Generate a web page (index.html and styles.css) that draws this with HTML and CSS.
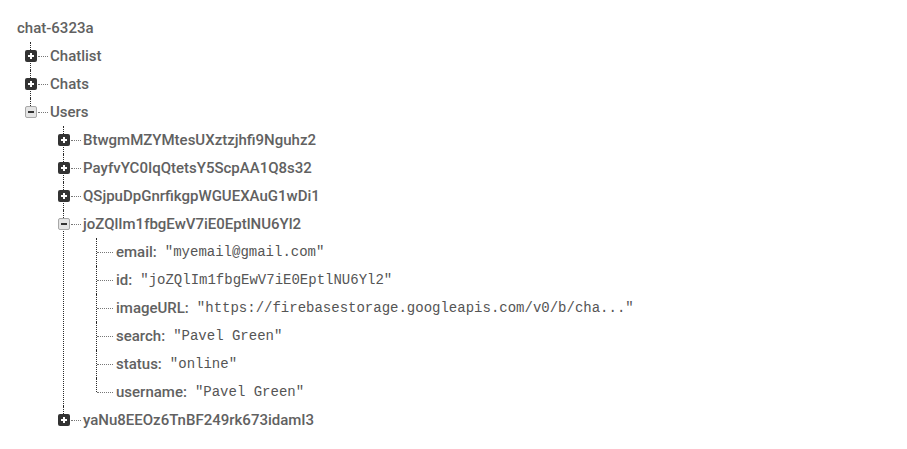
FILE: index.html
```html
<!DOCTYPE html>
<html>
<head>
<meta charset="utf-8">
<link rel="stylesheet" href="styles.css">
</head>
<body>
<div class="tree">
  <div class="root-row"><span class="key">chat-6323a</span></div>
  <ul class="children lvl1">
    <li>
      <div class="row"><span class="toggle plus"></span><span class="conn"></span><span class="key">Chatlist</span></div>
    </li>
    <li>
      <div class="row"><span class="toggle plus"></span><span class="conn"></span><span class="key">Chats</span></div>
    </li>
    <li>
      <div class="row"><span class="toggle minus"></span><span class="conn"></span><span class="key">Users</span></div>
      <ul class="children">
        <li><div class="row"><span class="toggle plus"></span><span class="conn"></span><span class="key">BtwgmMZYMtesUXztzjhfi9Nguhz2</span></div></li>
        <li><div class="row"><span class="toggle plus"></span><span class="conn"></span><span class="key">PayfvYC0IqQtetsY5ScpAA1Q8s32</span></div></li>
        <li><div class="row"><span class="toggle plus"></span><span class="conn"></span><span class="key">QSjpuDpGnrfikgpWGUEXAuG1wDi1</span></div></li>
        <li>
          <div class="row"><span class="toggle minus"></span><span class="conn"></span><span class="key">joZQlIm1fbgEwV7iE0EptlNU6Yl2</span></div>
          <ul class="children">
            <li><div class="row"><span class="conn leaf"></span><span class="key">email:</span><span class="val">"myemail@gmail.com"</span></div></li>
            <li><div class="row"><span class="conn leaf"></span><span class="key">id:</span><span class="val">"joZQlIm1fbgEwV7iE0EptlNU6Yl2"</span></div></li>
            <li><div class="row"><span class="conn leaf"></span><span class="key">imageURL:</span><span class="val">"https://firebasestorage.googleapis.com/v0/b/cha..."</span></div></li>
            <li><div class="row"><span class="conn leaf"></span><span class="key">search:</span><span class="val">"Pavel Green"</span></div></li>
            <li><div class="row"><span class="conn leaf"></span><span class="key">status:</span><span class="val">"online"</span></div></li>
            <li><div class="row"><span class="conn leaf"></span><span class="key">username:</span><span class="val">"Pavel Green"</span></div></li>
          </ul>
        </li>
        <li><div class="row"><span class="toggle plus"></span><span class="conn"></span><span class="key">yaNu8EEOz6TnBF249rk673idamI3</span></div></li>
      </ul>
    </li>
  </ul>
</div>
</body>
</html>
```

FILE: styles.css
```css
html, body {
  margin: 0;
  padding: 0;
  background: #ffffff;
}

.tree {
  padding: 14px 0 0 17px;
  font-family: Roboto, "Liberation Sans", sans-serif;
  font-size: 15px;
}

.root-row {
  height: 28px;
  display: flex;
  align-items: center;
}

.children {
  list-style: none;
  margin: 0 0 0 33px;
  padding: 0;
}

.children.lvl1 {
  margin-left: 13px;
}

.children li {
  position: relative;
}

.children li::before {
  content: "";
  position: absolute;
  left: 0;
  top: 0;
  bottom: 0;
  border-left: 1px dotted #2a2a2a;
}

.children li:last-child::before {
  bottom: auto;
  height: 14px;
}

.row {
  position: relative;
  height: 28px;
  display: flex;
  align-items: center;
}

.toggle {
  position: relative;
  z-index: 1;
  box-sizing: border-box;
  width: 12px;
  height: 12px;
  margin-left: -5px;
  border-radius: 2px;
  flex: none;
}

.toggle.plus {
  background: #333333;
}

.toggle.plus::before,
.toggle.plus::after {
  content: "";
  position: absolute;
  background: #ffffff;
}

.toggle.plus::before {
  left: 3px;
  top: 5px;
  width: 6px;
  height: 2px;
}

.toggle.plus::after {
  left: 5px;
  top: 3px;
  width: 2px;
  height: 6px;
}

.toggle.minus {
  background: #e4e4e4;
  border: 1px solid #a8a8a8;
}

.toggle.minus::before {
  content: "";
  position: absolute;
  left: 2px;
  top: 4px;
  width: 6px;
  height: 2px;
  background: #333333;
}

.conn {
  flex: none;
  width: 10px;
  margin-left: 1px;
  margin-right: 2px;
  border-top: 1px dotted #777777;
  align-self: center;
}

.conn.leaf {
  width: 16px;
  margin-left: 1px;
  margin-right: 3px;
}

.key {
  font-weight: 500;
  color: #616161;
  white-space: nowrap;
}

.val {
  margin-left: 8px;
  font-family: "Liberation Mono", "DejaVu Sans Mono", monospace;
  font-size: 14px;
  color: #555555;
  white-space: nowrap;
}
```
